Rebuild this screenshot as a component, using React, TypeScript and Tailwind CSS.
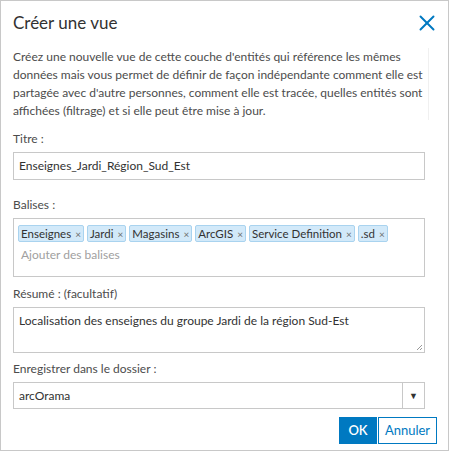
import { X } from "lucide-react";

const tags = ["Enseignes", "Jardi", "Magasins", "ArcGIS", "Service Definition", ".sd"];

export default function App() {
  return (
    <div
      className="w-[449px] h-[451px] border border-[#c8c8c8] bg-white text-[#4c4c4c] text-[12px]"
      style={{ fontFamily: "Lato, 'Noto Sans', sans-serif" }}
    >
      <div className="flex items-center justify-between pl-3 pr-[8px] pt-[10px] h-[34px]">
        <h1 className="text-[17px] leading-[24px] text-[#323232]">Créer une vue</h1>
        <X size={26} strokeWidth={1.8} className="text-[#0079c1]" />
      </div>

      <div className="pl-3 pr-[2px] mt-[13px] border-r border-[#f0f0f0] mr-[19px]">
        <p className="leading-[18px]">
          Créez une nouvelle vue de cette couche d'entités qui référence les mêmes données mais vous
          permet de définir de façon indépendante comment elle est partagée avec d'autre personnes,
          comment elle est tracée, quelles entités sont affichées (filtrage) et si elle peut être
          mise à jour.
        </p>
      </div>

      <div className="pl-3 pr-[23px] mt-[11px]">
        <label className="block leading-[16px]">Titre :</label>
        <div className="mt-[5px] h-[28px] border border-[#c8c8c8] px-[5px] flex items-center text-[#323232]">
          Enseignes_Jardi_Région_Sud_Est
        </div>

        <label className="block leading-[16px] mt-[17px]">Balises :</label>
        <div className="mt-[5px] h-[59px] border border-[#c8c8c8] px-[4px] pt-[6px]">
          <div className="flex gap-[3px]">
            {tags.map((t) => (
              <span
                key={t}
                className="h-[17px] flex items-center gap-[4px] px-[2px] whitespace-nowrap bg-[#d2e9f9] border border-[#a9d3ef] rounded-[2px] leading-none text-[11.5px] text-[#323232]"
              >
                {t}
                <span className="text-[10px] text-[#6e6e6e]">×</span>
              </span>
            ))}
          </div>
          <div className="mt-[4px] px-[3px] text-[#a0a0a0] leading-[18px]">Ajouter des balises</div>
        </div>

        <label className="block leading-[16px] mt-[9px]">Résumé : (facultatif)</label>
        <div className="mt-[5px] h-[46px] border border-[#c8c8c8] px-[5px] pt-[4px] relative text-[#323232]">
          Localisation des enseignes du groupe Jardi de la région Sud-Est
          <svg className="absolute right-[1px] bottom-[1px]" width="7" height="7" viewBox="0 0 7 7">
            <path d="M6 1L1 6M6 4L4 6" stroke="#999" strokeWidth="1" />
          </svg>
        </div>

        <label className="block leading-[16px] mt-[8px]">Enregistrer dans le dossier :</label>
        <div className="mt-[5px] h-[27px] border border-[#c8c8c8] flex text-[#323232]">
          <div className="flex-1 px-[5px] flex items-center">arcOrama</div>
          <div className="w-[22px] border-l border-[#c8c8c8] flex items-center justify-center text-[9px]">
            ▼
          </div>
        </div>
      </div>

      <div className="flex justify-end gap-[1px] pr-[11px] mt-[8px]">
        <button className="w-[38px] h-[27px] bg-[#0079c1] text-white text-[13px] font-semibold">
          OK
        </button>
        <button className="w-[59px] h-[27px] border border-[#0079c1] bg-white text-[#0079c1] text-[13px]">
          Annuler
        </button>
      </div>
    </div>
  );
}
